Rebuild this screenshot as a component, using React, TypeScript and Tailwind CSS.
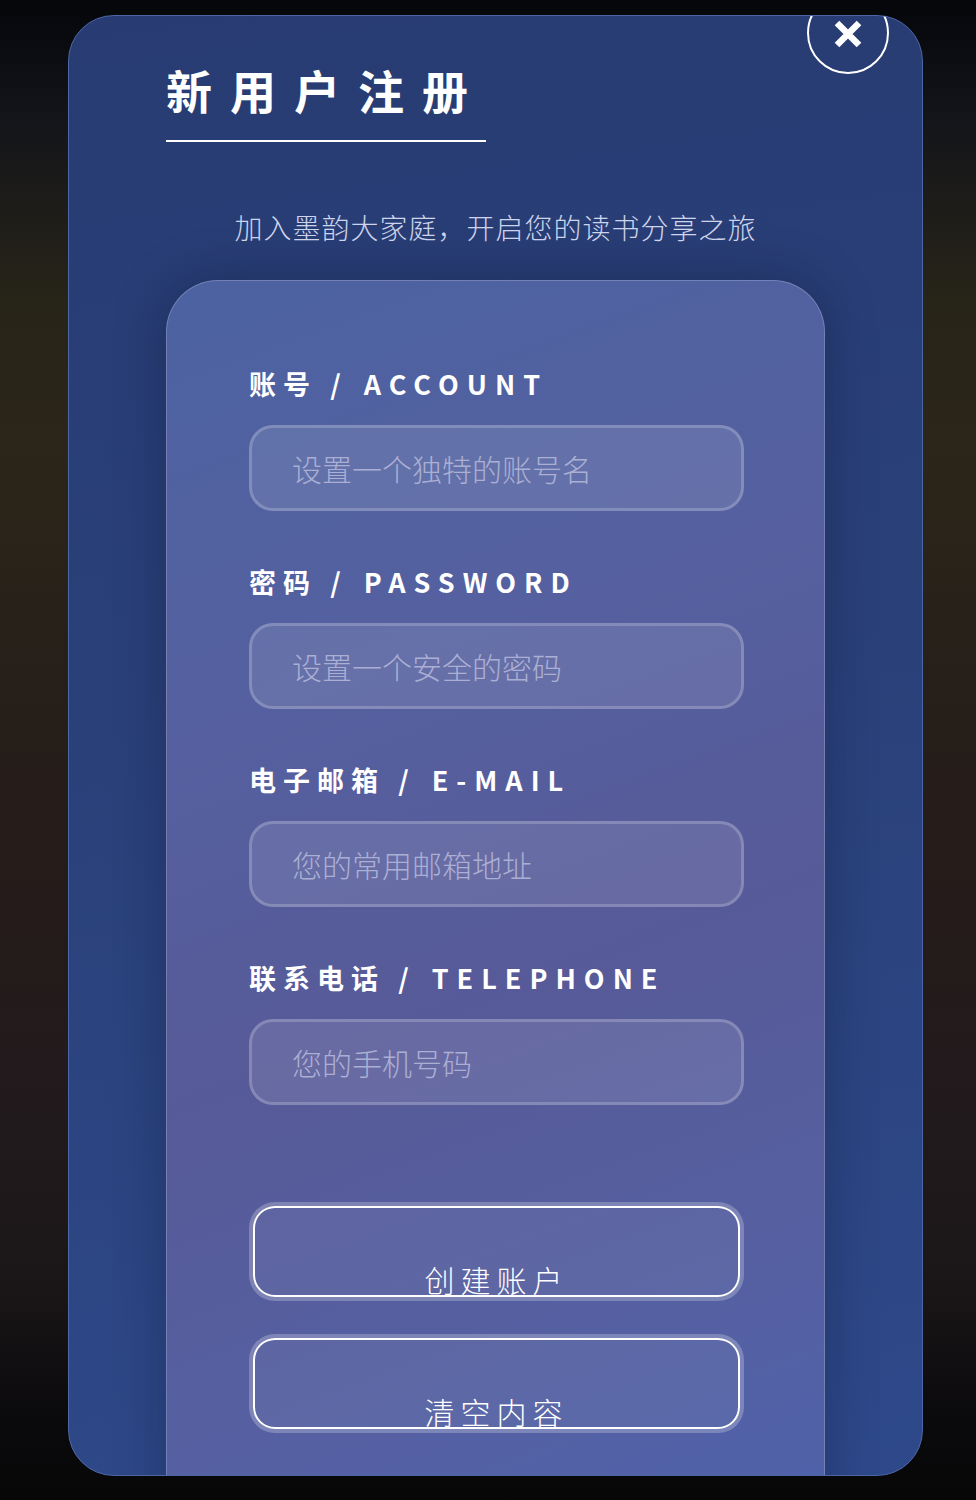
const fields = [
  { cn: "账号", en: "ACCOUNT", placeholder: "设置一个独特的账号名", type: "text" },
  { cn: "密码", en: "PASSWORD", placeholder: "设置一个安全的密码", type: "password" },
  { cn: "电子邮箱", en: "E-MAIL", placeholder: "您的常用邮箱地址", type: "email" },
  { cn: "联系电话", en: "TELEPHONE", placeholder: "您的手机号码", type: "tel" },
];

function CloseIcon() {
  return (
    <svg width="30" height="30" viewBox="0 0 30 30" fill="none">
      <path d="M4 4L26 26M26 4L4 26" stroke="white" strokeWidth="6.5" />
    </svg>
  );
}

export default function App() {
  return (
    <div className="h-[1500px] w-full overflow-hidden bg-[linear-gradient(180deg,#04060a_0%,#14151a_8%,#272418_20%,#2b2619_30%,#271f19_45%,#251b1a_60%,#211a1d_75%,#1a1618_86%,#0b0a0c_94%,#070708_100%)] pt-[15px] font-['Noto_Sans_CJK_SC',sans-serif]">
      <div className="relative ml-[68px] h-[1461px] w-[855px] overflow-hidden rounded-[46px] border border-[#4d66a8] bg-[linear-gradient(172deg,#283c73_0%,#2a4079_45%,#2e498a_100%)] px-[97px] pt-[39px]">
        <button className="absolute -top-[24px] right-[33px] flex h-[82px] w-[82px] items-center justify-center rounded-full border-2 border-white pt-[2px]">
          <CloseIcon />
        </button>

        <h1 className="inline-block border-b-2 border-white pb-[16px] text-[46px] font-bold leading-[69px] tracking-[18px] text-white">
          新用户注册
        </h1>

        <p className="mt-[64px] text-center text-[28px] font-light leading-[42px] tracking-[1px] text-[#cdd4ec]">
          加入墨韵大家庭，开启您的读书分享之旅
        </p>

        <div className="mt-[32px] rounded-t-[52px] border border-white/20 bg-[linear-gradient(160deg,#4c62a1_0%,#5560a0_30%,#575a98_55%,#5560a2_80%,#4e62ab_100%)] pb-[120px] pl-[82px] pr-[80px] pt-[84px] shadow-[0_0_50px_rgba(10,20,50,0.35)]">
          {fields.map((f, i) => (
            <div key={f.en} className={i > 0 ? "mt-[52px]" : ""}>
              <label className="block text-[27px] font-bold leading-[38px] tracking-[7px] text-white">
                {f.cn} / <span className="ml-[3px] tracking-[8px]">{f.en}</span>
              </label>
              <input
                type={f.type}
                placeholder={f.placeholder}
                className="mt-[22px] block h-[86px] w-full rounded-[24px] border-[3px] border-white/20 bg-white/10 px-[40px] text-[30px] font-light text-white outline-none placeholder:text-[#abafd4]"
              />
            </div>
          ))}

          <div className="mt-[97px] flex flex-col gap-[33px]">
            <button className="flex h-[99px] w-full items-end justify-center rounded-[26px] border-4 border-white/20 bg-white/5 pb-[3px] shadow-[inset_0_0_0_2px_#ffffff]">
              <span className="text-[30px] font-light leading-[30px] tracking-[6px] text-white">创建账户</span>
            </button>
            <button className="flex h-[99px] w-full items-end justify-center rounded-[26px] border-4 border-white/20 bg-white/5 pb-[3px] shadow-[inset_0_0_0_2px_#ffffff]">
              <span className="text-[30px] font-light leading-[30px] tracking-[6px] text-white">清空内容</span>
            </button>
          </div>
        </div>
      </div>
    </div>
  );
}
